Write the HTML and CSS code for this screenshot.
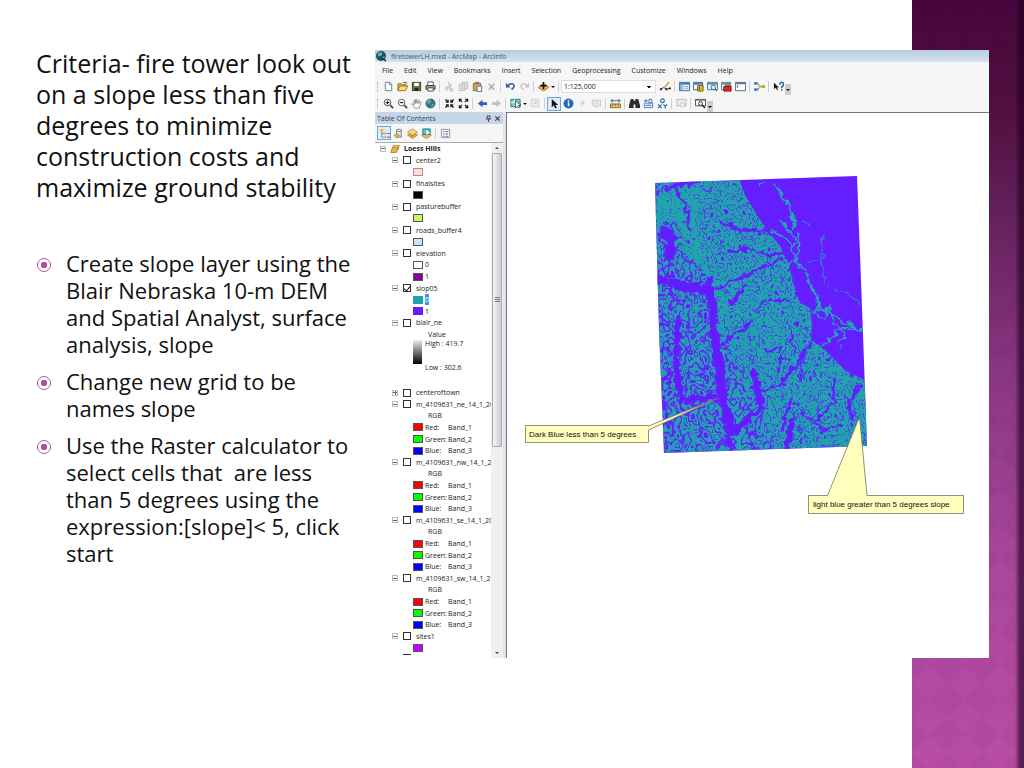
FILE: index.html
```html
<!DOCTYPE html>
<html lang="en">
<head>
<meta charset="utf-8">
<title>Fire tower slope criteria</title>
<link rel="stylesheet" href="styles.css">
</head>
<body>
<main class="slide">
  <section class="notes">
    <h1>Criteria- fire tower look out<br>on a slope less than five<br>degrees to minimize<br>construction costs and<br>maximize ground stability</h1>
    <ul>
      <li>Create slope layer using the<br>Blair Nebraska 10-m DEM<br>and Spatial Analyst, surface<br>analysis, slope</li>
      <li>Change new grid to be<br>names slope</li>
      <li>Use the Raster calculator to<br>select cells that&nbsp; are less<br>than 5 degrees using the<br>expression:[slope]&lt; 5, click<br>start</li>
    </ul>
  </section>

  <section class="app">
    <header class="titlebar">
      <svg viewBox="0 0 12 12"><circle cx="6" cy="6" r="5" fill="#17506e"/><path d="M3 3q3-2 4 0t-2 3-2-1zM7 7q3-1 3 0l-2 3z" fill="#5fc08a"/><path d="M7 8l4 3" stroke="#123" stroke-width="1.5"/></svg>
      <span>firetowerLH.mxd - ArcMap - ArcInfo</span>
    </header>
    <nav class="menubar">
      <button>File</button><button>Edit</button><button>View</button><button>Bookmarks</button><button>Insert</button><button>Selection</button><button>Geoprocessing</button><button>Customize</button><button>Windows</button><button>Help</button>
    </nav>
    <div class="toolbar">
      <span class="grip"></span>
      <button aria-label="New"><svg viewBox="0 0 12 12"><path d="M2.500 1.500h5l2 2v7h-7z" fill="#fff" stroke="#667a92"/><path d="M7 1.500v2.500h2.500" fill="none" stroke="#667a92"/></svg></button>
      <button aria-label="Open"><svg viewBox="0 0 12 12"><path d="M1 10V3h4l1 1h4v2" fill="#e8b84a" stroke="#8f6c1c"/><path d="M1 10.500l2-5h8.500l-2 5z" fill="#ffdc72" stroke="#8f6c1c"/><path d="M7 2q3-2 4 1" fill="none" stroke="#333"/></svg></button>
      <button aria-label="Save"><svg viewBox="0 0 12 12"><path d="M1.500 1.500h9v9h-9z" fill="#71703c" stroke="#33331c"/><path d="M3.500 2h5v3.500h-5z" fill="#fff"/><path d="M4 7.500h4v3H4z" fill="#222"/></svg></button>
      <button aria-label="Print"><svg viewBox="0 0 12 12"><path d="M3 1h6v4H3z" fill="#fff" stroke="#555"/><path d="M1 5h10v4H1z" fill="#99a28a" stroke="#3d4434"/><path d="M3 7.500h6v3.500H3z" fill="#fff" stroke="#444"/></svg></button>
      <span class="sep"></span>
      <button aria-label="Cut"><svg viewBox="0 0 12 12" fill="none" stroke="#c2c2c2" stroke-width="1.300"><path d="M5 1l2 7M9 4L4 7"/><circle cx="3" cy="8" r="1.500"/><circle cx="8" cy="9.500" r="1.500"/></svg></button>
      <button aria-label="Copy"><svg viewBox="0 0 12 12" fill="#e4e4e4" stroke="#bcbcbc"><path d="M4.500 1.500h6v7h-6z"/><path d="M1.500 3.500h6v7h-6z"/><path d="M3 6h3M3 8h3"/></svg></button>
      <button aria-label="Paste"><svg viewBox="0 0 12 12"><path d="M1.500 2.500h8v8h-8z" fill="#e0a64a" stroke="#886020"/><path d="M3.500 1h4v2.500h-4z" fill="#777"/><path d="M5.500 5.500h5v6h-5z" fill="#eef4ff" stroke="#5870a0"/></svg></button>
      <button aria-label="Delete"><svg viewBox="0 0 12 12"><path d="M3 3l6 6.500M9 3L3 9.500" stroke="#aaa" stroke-width="1.500"/></svg></button>
      <span class="sep"></span>
      <button aria-label="Undo"><svg viewBox="0 0 12 12"><path d="M3 5q5-4 7 0 0 3-3 4" fill="none" stroke="#2c5d9f" stroke-width="1.600"/><path d="M1 2v5h5z" fill="#2c5d9f"/></svg></button>
      <button aria-label="Redo"><svg viewBox="0 0 12 12"><path d="M9 5Q4 1 2 5q0 3 3 4" fill="none" stroke="#c6c6c6" stroke-width="1.500"/><path d="M11 2v5H6z" fill="#c6c6c6"/></svg></button>
      <span class="sep"></span>
      <button aria-label="Add data"><svg viewBox="0 0 12 12"><path d="M6 3l6 4-6 4-6-4z" fill="#e9bd45" stroke="#7d6318" stroke-width=".7"/><path d="M6 1v8M2.500 5h7" stroke="#111" stroke-width="1.800"/></svg></button>
      <button class="drop" aria-label="Add data options"></button>
      <span class="sep"></span>
      <select class="scale" aria-label="Map scale"><option>1:125,000</option></select>
      <button class="after-scale" aria-label="Editor"><svg viewBox="0 0 12 12"><path d="M1 9l3-2 3 2 4-1" fill="none" stroke="#222"/><path d="M4 8l6-7" stroke="#c99a35" stroke-width="1.500"/><path d="M0 8h2v2H0zM6 8h2v2H6zM10 7h2v2h-2z" fill="#222"/></svg></button>
      <span class="sep"></span>
      <button aria-label="Contents"><svg viewBox="0 0 12 12"><path d="M.5 1.500h11v9H.5z" fill="#eaf3ff" stroke="#375f9b"/><path d="M1 2h10v2H1z" fill="#447bc5"/><path d="M1 4h3v6H1z" fill="#84b2e4"/><path d="M5 6h5M5 8h5" stroke="#8aa"/></svg></button>
      <button aria-label="Catalog"><svg viewBox="0 0 12 12"><path d="M.5 1.500h10v8H.5z" fill="#f5f8ff" stroke="#375f9b"/><path d="M1 2h9v2H1z" fill="#447bc5"/><path d="M5 5h6v6H5z" fill="#e8bd22" stroke="#765c10"/><path d="M7 6v4" stroke="#453"/></svg></button>
      <button aria-label="Search window"><svg viewBox="0 0 12 12"><path d="M.5 1.500h11v8H.5z" fill="#e6f1f6" stroke="#50708c"/><path d="M1 2h10v2H1z" fill="#5e8cb4"/><circle cx="7" cy="7" r="2.500" fill="#bff" stroke="#287284"/><path d="M9 9l2 2" stroke="#333"/></svg></button>
      <button aria-label="Toolbox"><svg viewBox="0 0 12 12"><path d="M.5 1.500h10v8H.5z" fill="#f5f8ff" stroke="#50708c"/><path d="M1 2h9v2H1z" fill="#5e8cb4"/><path d="M3 6h8v5H3z" fill="#ce2c1e" stroke="#7c1812"/><path d="M5 6V4.500h4V6" fill="none" stroke="#7c1812"/></svg></button>
      <button aria-label="Python"><svg viewBox="0 0 12 12"><path d="M.5 1.500h11v9H.5z" fill="#fff" stroke="#54677b"/><path d="M1 2h10v1.500H1z" fill="#54779b"/><path d="M2 5l1.500 1L2 7" fill="none" stroke="#333"/></svg></button>
      <span class="sep"></span>
      <button aria-label="ModelBuilder"><svg viewBox="0 0 12 12"><path d="M3 2l4 4-4 4M7 6h3" fill="none" stroke="#444"/><path d="M0 1h4v3H0zM0 8h4v3H0z" fill="#3f8ed2"/><circle cx="6.500" cy="6" r="1.700" fill="#e7b930"/><path d="M9 4.500h3v3H9z" fill="#6fb654"/></svg></button>
      <span class="sep"></span>
      <button aria-label="What's this?"><svg viewBox="0 0 12 12"><path d="M1 2v7l2-2 1.500 3 1-.6L4 7h2.500z" fill="#111"/><path d="M7.500 4q0-2.500 2-2.500t2 2-2 3V8" fill="none" stroke="#1b57a3" stroke-width="1.500"/><path d="M8.700 9h1.600v1.500H8.700z" fill="#1b57a3"/></svg></button>
      <button class="more" aria-label="Standard toolbar options"></button>
    </div>
    <div class="toolbar">
      <span class="grip"></span>
      <button aria-label="Zoom in"><svg viewBox="0 0 12 12"><circle cx="5" cy="5" r="3.600" fill="#fff" stroke="#444"/><path d="M3 5h4M5 3v4" stroke="#222" stroke-width="1.300"/><path d="M8 8l3 3" stroke="#5d4536" stroke-width="2"/></svg></button>
      <button aria-label="Zoom out"><svg viewBox="0 0 12 12"><circle cx="5" cy="5" r="3.600" fill="#fff" stroke="#555"/><path d="M3 5h4" stroke="#222" stroke-width="1.300"/><path d="M8 8l3 3" stroke="#5d4536" stroke-width="2"/></svg></button>
      <button aria-label="Pan"><svg viewBox="0 0 12 12"><path d="M4 11L1 6.500l1-.5 1.500 1.500L3 3l1-.5L5 6V1.500h1L6.500 6 8 2l1 .5L8.300 6 10 4l1 .7L9 11z" fill="#fff" stroke="#777" stroke-width=".8"/></svg></button>
      <button aria-label="Full extent"><svg viewBox="0 0 12 12"><circle cx="6" cy="6" r="5" fill="#2e72a4" stroke="#27506c" stroke-width=".7"/><path d="M3 2q4-1 4 2l-3 3-2-2zM7 7l3-1-1 3-2 1z" fill="#65b463"/></svg></button>
      <span class="sep"></span>
      <button aria-label="Fixed zoom in"><svg viewBox="0 0 12 12" stroke="#111" stroke-width="1.300" fill="none"><path d="M1.500 1.500l2 2M10.500 1.500l-2 2M1.500 10.500l2-2M10.500 10.500l-2-2M2 4.500h2.500V2M7.500 2v2.500H10M2 7.500h2.500V10M7.500 10V7.500H10"/></svg></button>
      <button aria-label="Fixed zoom out"><svg viewBox="0 0 12 12" stroke="#111" stroke-width="1.300" fill="none"><path d="M1.500 1.500l3 3M10.500 1.500l-3 3M1.500 10.500l3-3M10.500 10.500l-3-3M1.500 4V1.500H4M8 1.500h2.500V4M1.500 8v2.500H4M8 10.500h2.500V8"/></svg></button>
      <span class="sep"></span>
      <button aria-label="Back"><svg viewBox="0 0 12 12"><path d="M1 6l5-4v2.500h5v3H6V10z" fill="#2762bc"/></svg></button>
      <button aria-label="Forward"><svg viewBox="0 0 12 12"><path d="M11 6L6 2v2.500H1v3h5V10z" fill="#bfc3c8"/></svg></button>
      <span class="sep"></span>
      <button aria-label="Select features"><svg viewBox="0 0 12 12"><path d="M1 1.500h10v8H1z" fill="#7bd0d0" stroke="#277"/><path d="M1 5h4V2" fill="none" stroke="#fff"/><path d="M6 3v8l2-2 2 2 1-1-2-2h3z" fill="#fff" stroke="#222" stroke-width=".7"/></svg></button>
      <button class="drop" aria-label="Select options"></button>
      <button aria-label="Clear selection"><svg viewBox="0 0 12 12"><path d="M1.500 1.500h8v8h-8z" fill="#f0f0f0" stroke="#ccc"/><path d="M4 4h4M4 6h4" stroke="#ccc"/></svg></button>
      <span class="sep"></span>
      <button class="active" aria-label="Select elements"><svg viewBox="0 0 12 12"><path d="M3 1v9l2.200-2L7 11.500l1.500-.8L7 7.500h3z" fill="#111"/></svg></button>
      <button aria-label="Identify"><svg viewBox="0 0 12 12"><circle cx="6" cy="6" r="5" fill="#2369bd" stroke="#174b88" stroke-width=".7"/><path d="M6 5v4M6 2.500V4" stroke="#fff" stroke-width="1.600"/></svg></button>
      <button aria-label="Hyperlink"><svg viewBox="0 0 12 12"><path d="M8 1L3 6h3l-3 5 6-6H6z" fill="#ccc"/></svg></button>
      <button aria-label="HTML popup"><svg viewBox="0 0 12 12"><path d="M1.500 2.500h9v6h-3l-2 2v-2h-4z" fill="#f2f2f2" stroke="#c4c4c4"/><path d="M3 4.500h6M3 6.500h6" stroke="#ccc"/></svg></button>
      <span class="sep"></span>
      <button aria-label="Measure"><svg viewBox="0 0 12 12"><path d="M1 3h10M3 1L1 3l2 2M9 1l2 2-2 2" fill="none" stroke="#255a9f"/><path d="M.5 6.500h11v4H.5z" fill="#efc25d" stroke="#8b6619"/><path d="M3 7v1.500M6 7v1.500M9 7v1.500" stroke="#654"/></svg></button>
      <span class="sep"></span>
      <button aria-label="Find"><svg viewBox="0 0 12 12"><path d="M2 1h3v2h2V1h3l2 7v3H7V7H5v4H0V8z" fill="#2a2f35"/></svg></button>
      <button aria-label="Find route"><svg viewBox="0 0 12 12"><path d="M6.500 1.500h3v4h-3zM1.500 5.500h9v5h-9z" fill="#e8f4ff" stroke="#3e7fb5"/><path d="M1 3h3M3 1.500L4.500 3 3 4.500M3 8h6" fill="none" stroke="#2760a6"/></svg></button>
      <button aria-label="Go to XY"><svg viewBox="0 0 12 12" fill="none" stroke="#2868ac" stroke-width="1.200"><circle cx="6" cy="3" r="2"/><path d="M1 7l4 4M5 7l-4 4M7 7l2 2 2-2M9 9v2.500"/></svg></button>
      <span class="sep"></span>
      <button aria-label="Time slider"><svg viewBox="0 0 12 12"><path d="M1 1.500h10v7H1z" fill="#eee" stroke="#bbb"/><circle cx="7" cy="7.500" r="2.500" fill="#f5f5f5" stroke="#bbb"/></svg></button>
      <span class="sep"></span>
      <button aria-label="Viewer window"><svg viewBox="0 0 12 12"><path d="M.5 1.500h11v7H.5z" fill="#fff" stroke="#444"/><path d="M1 2.500h10" stroke="#678"/><circle cx="6" cy="6" r="2.200" fill="#cfe8f5" stroke="#333"/><path d="M8 8l3 3" stroke="#222" stroke-width="1.500"/></svg></button>
      <button class="more" aria-label="Tools toolbar options"></button>
    </div>

    <div class="workspace">
      <aside class="toc">
        <div class="toc-head"><span>Table Of Contents</span>
          <button aria-label="Auto hide"><svg viewBox="0 0 8 8"><path d="M2.500 1h3v3.500M1 4.500h6M4 4.500V8M2.500 1v3.500" fill="none" stroke="#334"/></svg></button>
          <button aria-label="Close"><svg viewBox="0 0 8 8"><path d="M1.500 1.500l5 5M6.500 1.500l-5 5" stroke="#334" stroke-width="1.200"/></svg></button>
        </div>
        <div class="toolbar toc-tools">
          <button class="active" aria-label="List by drawing order"><svg viewBox="0 0 12 12"><path d="M3 3v7h3M3 6h3" fill="none" stroke="#888"/><path d="M1 1h4v3H1z" fill="#e8bd55"/><path d="M6 5h2v2H6zM6 9h2v2H6z" fill="#d59b3a"/><path d="M9 6h3M9 10h3" stroke="#557"/></svg></button>
          <button aria-label="List by source"><svg viewBox="0 0 12 12"><path d="M4 2h5v8H4z" fill="#dfe2ea" stroke="#77798a"/><ellipse cx="6.500" cy="2.500" rx="2.500" ry="1.200" fill="#fff" stroke="#77798a"/><path d="M1 8l3-2 3 2-3 3z" fill="#e5b446" stroke="#8c6b20" stroke-width=".6"/></svg></button>
          <button aria-label="List by visibility"><svg viewBox="0 0 12 12" stroke="#a57a1e" stroke-width=".7"><path d="M6 4.500l5.500 3-5.500 4-5.500-4z" fill="#d6a340"/><path d="M6 1l5.500 3.500L6 8 .5 4.500z" fill="#f5d27b"/></svg></button>
          <button aria-label="List by selection"><svg viewBox="0 0 12 12"><path d="M6 5l5.500 3L6 11.500.5 8z" fill="#e8b94a" stroke="#a57a1e" stroke-width=".7"/><path d="M2 1h8v6H2z" fill="#5fc4cc" stroke="#297280"/><path d="M6 2v6l2-2h2z" fill="#fff"/></svg></button>
          <span class="sep"></span>
          <button aria-label="Options"><svg viewBox="0 0 12 12"><path d="M1.500 1.500h9v9h-9z" fill="#fff" stroke="#8290a0"/><path d="M3 4h2M6 4h3M3 6.500h2M6 6.500h3M3 9h2M6 9h3" stroke="#49607c"/></svg></button>
        </div>
        <div class="tree-wrap">
          <div class="tree">
            <div class="row root"><button class="tog" aria-label="Collapse"></button><svg viewBox="0 0 12 10"><path d="M4 .5h7.500l-2 6H2z" fill="#f4d27a" stroke="#a87c22"/><path d="M3 3h7l-2 6.500H.5z" fill="#e9b64c" stroke="#a87c22"/></svg><b>Loess Hills</b></div>
            <div class="row"><button class="tog" aria-label="Collapse"></button><label><input type="checkbox">center2</label></div>
            <div class="row sub"><i class="sw pink"></i></div>
            <div class="row"><button class="tog" aria-label="Collapse"></button><label><input type="checkbox">finalsites</label></div>
            <div class="row sub"><i class="sw black"></i></div>
            <div class="row"><button class="tog" aria-label="Collapse"></button><label><input type="checkbox">pasturebuffer</label></div>
            <div class="row sub"><i class="sw lime"></i></div>
            <div class="row"><button class="tog" aria-label="Collapse"></button><label><input type="checkbox">roads_buffer4</label></div>
            <div class="row sub"><i class="sw sky"></i></div>
            <div class="row"><button class="tog" aria-label="Collapse"></button><label><input type="checkbox">elevation</label></div>
            <div class="row sub"><i class="sw white"></i>0</div>
            <div class="row sub"><i class="sw purple"></i>1</div>
            <div class="row"><button class="tog" aria-label="Collapse"></button><label><input type="checkbox" checked>slop05</label></div>
            <div class="row sub"><i class="sw teal"></i><mark>0</mark></div>
            <div class="row sub"><i class="sw violet"></i>1</div>
            <div class="row"><button class="tog" aria-label="Collapse"></button><label><input type="checkbox">blair_ne</label></div>
            <div class="row head">Value</div>
            <div class="ramp"><i></i><div><span>High : 419.7</span><span>Low : 302.6</span></div></div>
            <div class="row"></div>
            <div class="row"><button class="tog plus" aria-label="Expand"></button><label><input type="checkbox">centeroftown</label></div>
            <div class="row"><button class="tog" aria-label="Collapse"></button><label><input type="checkbox">m_4109631_ne_14_1_20</label></div>
            <div class="row head">RGB</div>
            <div class="row sub"><i class="sw red"></i><span class="ch">Red:</span>Band_1</div>
            <div class="row sub"><i class="sw green"></i><span class="ch">Green:</span>Band_2</div>
            <div class="row sub"><i class="sw blue"></i><span class="ch">Blue:</span>Band_3</div>
            <div class="row"><button class="tog" aria-label="Collapse"></button><label><input type="checkbox">m_4109631_nw_14_1_2</label></div>
            <div class="row head">RGB</div>
            <div class="row sub"><i class="sw red"></i><span class="ch">Red:</span>Band_1</div>
            <div class="row sub"><i class="sw green"></i><span class="ch">Green:</span>Band_2</div>
            <div class="row sub"><i class="sw blue"></i><span class="ch">Blue:</span>Band_3</div>
            <div class="row"><button class="tog" aria-label="Collapse"></button><label><input type="checkbox">m_4109631_se_14_1_20</label></div>
            <div class="row head">RGB</div>
            <div class="row sub"><i class="sw red"></i><span class="ch">Red:</span>Band_1</div>
            <div class="row sub"><i class="sw green"></i><span class="ch">Green:</span>Band_2</div>
            <div class="row sub"><i class="sw blue"></i><span class="ch">Blue:</span>Band_3</div>
            <div class="row"><button class="tog" aria-label="Collapse"></button><label><input type="checkbox">m_4109631_sw_14_1_2</label></div>
            <div class="row head">RGB</div>
            <div class="row sub"><i class="sw red"></i><span class="ch">Red:</span>Band_1</div>
            <div class="row sub"><i class="sw green"></i><span class="ch">Green:</span>Band_2</div>
            <div class="row sub"><i class="sw blue"></i><span class="ch">Blue:</span>Band_3</div>
            <div class="row"><button class="tog" aria-label="Collapse"></button><label><input type="checkbox">sites1</label></div>
            <div class="row sub"><i class="sw magenta"></i></div>
            <div class="peek"></div>
          </div>
          <div class="scroll"><span class="up"></span><span class="thumb"></span><span class="track"></span><span class="down"></span></div>
        </div>
      </aside>
      <div class="map">
        <svg viewBox="507 113 482 544" preserveAspectRatio="xMidYMin meet">
          <defs>
            <clipPath id="sheet"><path d="M655 183L857 176L862 307L867 446L664 453L659 330Z"/></clipPath>
            <filter id="hills" x="0" y="0" width="100%" height="100%" color-interpolation-filters="sRGB">
              <feTurbulence type="fractalNoise" baseFrequency="0.14 0.11" numOctaves="2" seed="7"/>
              <feColorMatrix values="0 0 0 0 .12  0 0 0 0 .65  0 0 0 0 .68  1 0 0 0 0"/>
              <feComponentTransfer><feFuncA type="discrete" tableValues="0 0 0 0 0 .5 1 1 .9 1 .3 1 1 .9 .4 1 1 1 1 1"/></feComponentTransfer>
              <feComposite in2="SourceGraphic" operator="in"/>
            </filter>
            <filter id="ridges" x="0" y="0" width="100%" height="100%" color-interpolation-filters="sRGB">
              <feTurbulence type="fractalNoise" baseFrequency="0.11 0.09" numOctaves="2" seed="21"/>
              <feColorMatrix values="0 0 0 0 .12  0 0 0 0 .65  0 0 0 0 .68  1 0 0 0 0"/>
              <feComponentTransfer><feFuncA type="discrete" tableValues="0 0 0 0 0 .8 1 .8 .2 0 .8 1 .9 .2 1 1 .3 1 0 0"/></feComponentTransfer>
              <feComposite in2="SourceGraphic" operator="in"/>
            </filter>
            <filter id="rough" x="-20%" y="-20%" width="140%" height="140%">
              <feTurbulence type="fractalNoise" baseFrequency="0.15" numOctaves="2" seed="3"/>
              <feDisplacementMap in="SourceGraphic" scale="9" xChannelSelector="R" yChannelSelector="G"/>
            </filter>
          </defs>
          <g clip-path="url(#sheet)">
            <path d="M650 170h220v290H650z" fill="#641eff"/>
            <path filter="url(#ridges)" d="M654 180H700L696 225L704 262L722 290L722 350L735 400L750 456H654Z"/>
            <path filter="url(#hills)" d="M690 170H736L745 195L757 215L767 230L780 246L788 262L794 285L800 303L810 308L812 325L811 340L825 350L845 370L868 382V456H780L760 430L765 405L745 390L736 360L722 340L712 290L700 262L690 225L680 195Z"/>
            <path filter="url(#hills)" d="M656 197Q668 186 682 194L690 210L698 235L700 260H686L680 225L668 220L657 226Z"/>
            <path filter="url(#ridges)" d="M720 340L736 360L745 390L765 405L760 430L780 456H740L722 400Z"/>
            <g filter="url(#rough)" fill="none" stroke="#641eff" stroke-linecap="round" stroke-linejoin="round">
              <path stroke-width="11" d="M666 232q8 12 3 24"/>
              <path stroke-width="9" d="M710 290L714 330L719 370L725 410L734 432M659 280L702 290"/>
              <path stroke-width="6" d="M678 318L676 370L682 400L722 396M734 430L762 408L754 372M786 454L792 420M702 290L710 280M726 405L730 450"/>
              <path stroke-width="3" d="M720 222L742 230L764 230L782 238M728 252L750 248L768 256L788 252M715 290L740 278L762 268L788 256M730 305L745 285M722 345L740 330L752 322M762 390L780 385L800 360L810 345M834 380L834 400L818 420M860 385L848 405L852 420M790 400L782 430M690 230L686 205L676 190M665 190L682 184L700 184"/>
              <path stroke-width="2" d="M755 310L770 300L790 300M764 350H780V370M790 330L795 355M800 410L825 430L840 425M800 380L802 350"/>
            </g>
            <g filter="url(#rough)" fill="none" stroke="#20a9b4" stroke-linejoin="round">
              <path stroke-width="2" d="M774 182L785 200L792 212L794 230M797 232L799 250L796 262L805 270L812 288L820 307L838 318L850 325L864 332M864 330L842 328L828 340L814 350M780 220L792 234"/>
              <path stroke-width="1.500" d="M788 232L796 242L790 250L800 258M772 232L786 238L795 258L788 270M760 186L764 182M814 312L828 308L836 325L846 338L836 342M812 312L824 320L828 306"/>
              <path stroke-width="1" d="M822 237V276L830 288L848 293L866 310M804 222l6 3M806 262h12M840 347h4"/>
            </g>
          </g>
          <g fill="#ffffbe" stroke="#76765c" stroke-width=".8">
            <path d="M525.500 425.500H648.500V426L718 398L648.500 430V442.500H525.500Z"/>
            <path d="M808.500 495.500H827.500L859.500 417L867 495.500H963.500V513.500H808.500Z"/>
          </g>
          <text x="529" y="437">Dark Blue less than 5 degrees</text>
          <text x="813" y="507">light blue greater than 5 degrees slope</text>
        </svg>
      </div>
    </div>
  </section>
</main>
</body>
</html>
```
FILE: styles.css
```css
* { box-sizing: border-box; }
body { margin: 0; background: #fff; color: #111; }
button { padding: 0; border: 0; background: none; font: inherit; color: inherit; }

.slide {
  position: relative;
  display: grid;
  grid-template-columns: minmax(330px, 339fr) 614fr;
  min-height: 100vh;
  padding: 50px 35px 110px 36px;
}
/* Decorative band behind the right edge */
.slide::before {
  content: "";
  position: absolute;
  z-index: -1;
  inset: 0 0 0 auto;
  width: 112px;
  background:
    linear-gradient(90deg, transparent 103px, rgba(30, 0, 30, .6) 108px),
    linear-gradient(45deg, rgba(90, 20, 110, .06) 25%, transparent 25% 75%, rgba(90, 20, 110, .06) 75%) 0 0 / 35px 35px,
    linear-gradient(-45deg, rgba(90, 20, 110, .06) 25%, transparent 25% 75%, rgba(90, 20, 110, .06) 75%) 0 0 / 35px 35px,
    linear-gradient(#45053a, #52103f 15%, #62205a 27%, #8c3883 50%, #a9479c 75%, #b94da5);
}

.notes { font-family: "Trebuchet MS", "Open Sans", sans-serif; }
.notes h1 { margin: -2px 0 0; font-size: 25px; line-height: 31px; font-weight: 400; white-space: nowrap; }
.notes ul { margin: 47px 0 0; padding: 0; list-style: none; display: flex; flex-direction: column; gap: 10px; }
.notes li { position: relative; padding-left: 30px; font-size: 22px; line-height: 27px; white-space: nowrap; }
.notes li::before {
  content: "";
  position: absolute;
  left: 1px;
  top: 8px;
  width: 12px;
  height: 12px;
  border: 1px solid #b04fa0;
  border-radius: 50%;
  background: radial-gradient(circle, #b04fa0 3px, transparent 3px);
}

.app {
  display: flex;
  flex-direction: column;
  min-width: 0;
  background: #f6f6f6;
  font-family: "Segoe UI", "Open Sans", sans-serif;
  font-size: 7px;
  color: #222;
}
.titlebar { display: flex; align-items: center; gap: 4px; height: 12px; background: linear-gradient(#b9cddf, #d3e2ee); color: #456; }
.titlebar svg { width: 12px; height: 12px; }
.menubar { display: flex; align-items: center; gap: 11px; height: 16px; padding: 0 7px; }

.toolbar { display: flex; align-items: center; height: 17px; }
.toolbar button { display: flex; align-items: center; justify-content: center; flex: none; width: 14px; height: 14px; }
.toolbar svg { width: 11px; height: 11px; }
.toolbar .active { border: 1px solid #6ba7dc; background: #dcecfb; }
.grip { width: 6px; height: 10px; border-left: 1px dotted #aaa; margin-left: 2px; margin-right: -2px; }
.sep { flex: none; width: 1px; height: 11px; margin: 0 2px; background: #d0d0d0; }
.toolbar .drop { width: 6px; }
.drop::after, .more::after { content: ""; border: 2px solid transparent; border-top-color: #111; border-bottom: 0; }
.toolbar .more { width: 6px; height: 11px; align-self: flex-end; background: #ccc; }
.scale {
  appearance: none;
  width: 95px;
  height: 13px;
  padding: 0 2px;
  border: 1px solid #ddd;
  border-radius: 0;
  background: linear-gradient(#111, #111) right 4px top 5px / 4px 1px no-repeat, linear-gradient(#111, #111) right 5px top 6px / 2px 1px no-repeat #fff;
  font: inherit;
  color: inherit;
}
.toolbar .after-scale { margin-left: 2px; }

.workspace { flex: 1; display: flex; min-height: 0; }
.toc { display: flex; flex-direction: column; flex: none; width: 131px; border-right: 3px solid #dfe5ec; }
.toc-head { display: flex; align-items: center; gap: 2px; height: 12px; padding: 0 2px; background: #c6d6e6; color: #345; }
.toc-head span { flex: 1; }
.toc-head svg { display: block; width: 7px; height: 7px; }
.toc-tools { height: 18px; padding-left: 2px; }
.tree-wrap { flex: 1; display: flex; min-height: 0; border-top: 1px solid #aaa; }
.tree { flex: 1; display: flex; flex-direction: column; min-width: 0; overflow: hidden; background: #fff; line-height: 11px; }
.row { flex: 1 0 11px; display: flex; align-items: center; padding-left: 17px; white-space: nowrap; }
.row.root { padding-left: 5px; gap: 4px; }
.root svg { width: 10px; height: 8px; }
.row label { display: flex; align-items: center; }
.row input {
  appearance: none;
  display: grid;
  place-items: center;
  width: 8px;
  height: 8px;
  margin: 0 5px;
  border: 1px solid #333;
  background: #fff;
}
.row input:checked::after { content: ""; width: 3px; height: 5px; border: solid #111; border-width: 0 1px 1px 0; rotate: 40deg; }
.tog { flex: none; width: 6px; height: 6px; }
.row .tog { border: 1px solid #bbb; background: linear-gradient(#667, #667) center / 4px 1px no-repeat; }
.row .plus { background: linear-gradient(#667, #667) center / 4px 1px no-repeat, linear-gradient(#667, #667) center / 1px 4px no-repeat; }
.row.sub { padding-left: 38px; gap: 2px; }
.row.head { padding-left: 53px; }
.ch { width: 21px; }
mark { background: #3399ff; color: #fff; }
.sw { width: 10px; height: 8px; border: 1px solid #555; }
.pink { background: #ffdcdc; border-color: #b88; }
.black { background: #000; }
.lime { background: #c3f765; }
.sky { background: #bee8ff; }
.white { background: #fff; }
.purple { background: #8400a8; }
.teal { background: #1ca5ac; border-color: #1ca5ac; }
.violet { background: #641eff; border-color: #641eff; }
.red { background: #f00; }
.green { background: #0f0; }
.blue { background: #00f; }
.magenta { background: #c500ff; }
.ramp { flex: 3 0 33px; display: flex; gap: 3px; padding-left: 38px; }
.ramp i { width: 9px; height: 24px; background: linear-gradient(#eee, #000); }
.ramp div { display: flex; flex-direction: column; justify-content: space-between; padding-bottom: 4px; line-height: 7px; white-space: nowrap; }
.peek { flex: none; height: 4px; margin-left: 28px; width: 8px; border-top: 1px solid #333; }
.scroll { display: flex; flex-direction: column; align-items: center; flex: none; width: 12px; background: #f0f0f0; }
.up, .down { height: 10px; display: flex; align-items: center; }
.up::after, .down::after { content: ""; border: 2px solid transparent; border-bottom-color: #444; border-top: 0; }
.down::after { border-bottom: 0; border-top: 2px solid #444; }
.thumb {
  flex: 290;
  width: 10px;
  border: 1px solid #aaa;
  border-radius: 1px;
  background: repeating-linear-gradient(#777 0 1px, transparent 1px 2px) center / 5px 5px no-repeat, linear-gradient(90deg, #f4f4f4, #cfcfd4);
}
.track { flex: 200; }

.map { position: relative; flex: 1; min-width: 0; border: 1px solid #777; border-width: 1px 0 0 1px; background: #fff; }
.map svg { position: absolute; inset: 0; width: 100%; height: 100%; }
.map text { font: 8px "Liberation Sans", Arial, sans-serif; fill: #111; }
```
